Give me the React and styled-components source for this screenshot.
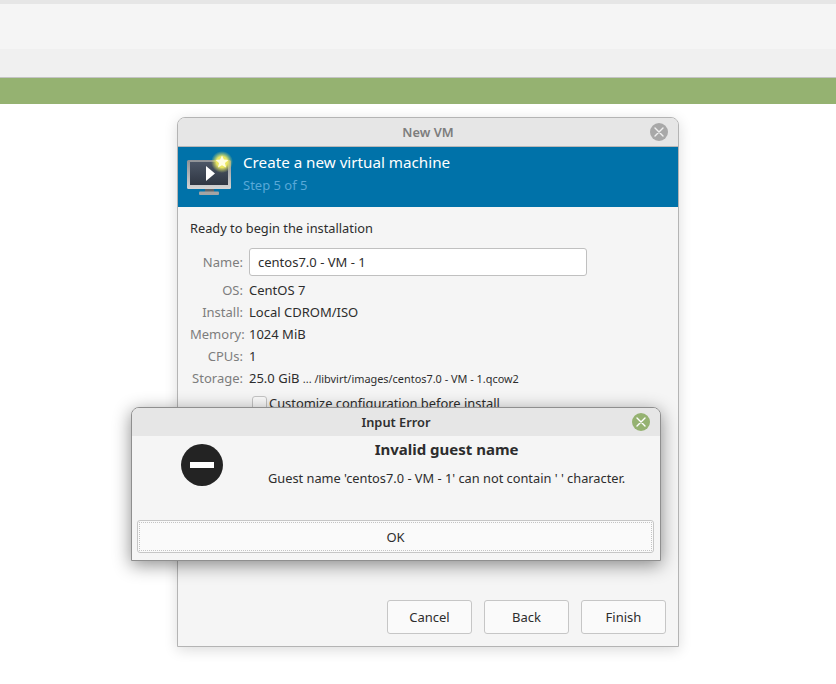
import React from 'react'
import styled, { createGlobalStyle } from 'styled-components'

const GlobalStyle = createGlobalStyle`
  html, body { margin: 0; padding: 0; background: #ffffff; }
  body {
    font-family: "Noto Sans", "Open Sans", sans-serif;
    font-size: 13px;
    color: #2d2d2d;
  }
`

const Page = styled.div`
  width: 836px;
  height: 684px;
  overflow: hidden;
`
const TopStrip = styled.div`
  height: 4px;
  background: #e6e6e6;
`
const TopBand = styled.div`
  height: 45px;
  background: #f5f5f5;
`
const LowerBand = styled.div`
  height: 28px;
  background: #f0f0f0;
  border-bottom: 1px solid #c4c4c4;
`
const GreenBar = styled.div`
  height: 26px;
  background: #95b271;
`
const Stage = styled.div`
  padding: 13px 0 0 177px;
`
const VmWindow = styled.div`
  position: relative;
  box-sizing: border-box;
  width: 502px;
  height: 530px;
  display: flex;
  flex-direction: column;
  background: #f5f5f5;
  border: 1px solid #b4b4b4;
  border-top-left-radius: 8px;
  border-top-right-radius: 8px;
  box-shadow: 0 3px 14px rgba(0, 0, 0, 0.14);
`
const TitleBar = styled.div`
  position: relative;
  flex: none;
  height: 28px;
  display: flex;
  align-items: center;
  justify-content: center;
  background: #e6e6e6;
  border-bottom: 1px solid #b8b8b8;
  border-top-left-radius: 7px;
  border-top-right-radius: 7px;
  font-weight: 600;
  font-size: 12.8px;
  color: ${p => (p.$active ? '#2f2f2f' : '#7d7d7d')};
`
const CloseDot = styled.span`
  position: absolute;
  right: ${p => p.$right}px;
  top: 5px;
  width: 18px;
  height: 18px;
  border-radius: 50%;
  display: flex;
  align-items: center;
  justify-content: center;
  background: ${p => p.$bg};
`
const Banner = styled.div`
  flex: none;
  height: 60px;
  display: flex;
  background: #0072a9;
`
const BannerIcon = styled.div`
  flex: none;
  width: 65px;
  padding: 2px 0 0 7px;
  box-sizing: border-box;
`
const BannerText = styled.div`
  display: flex;
  flex-direction: column;
  padding-top: 4px;
`
const BannerTitle = styled.div`
  font-size: 15.2px;
  line-height: 22px;
  color: #ffffff;
`
const BannerStep = styled.div`
  margin-top: 3px;
  font-size: 13px;
  line-height: 18px;
  color: #58a9d8;
`
const Body = styled.div`
  flex: 1;
  display: flex;
  flex-direction: column;
  padding: 12px;
`
const Heading = styled.div`
  font-size: 12.8px;
  line-height: 18px;
  color: #2d2d2d;
`
const InfoGrid = styled.div`
  margin-top: 11px;
  display: grid;
  grid-template-columns: 53px 1fr;
  grid-template-rows: 31px repeat(5, 22px);
  column-gap: 6px;
  align-items: start;
`
const Label = styled.div`
  text-align: right;
  font-size: 13px;
  line-height: ${p => (p.$tall ? 28 : 22)}px;
  color: #7d7d7d;
  white-space: nowrap;
`
const Value = styled.div`
  font-size: 13px;
  line-height: 22px;
  color: #2d2d2d;
  white-space: nowrap;
`
const PathText = styled.span`
  font-size: 10.9px;
`
const NameInput = styled.div`
  box-sizing: border-box;
  width: 338px;
  height: 28px;
  padding-left: 8px;
  display: flex;
  align-items: center;
  background: #ffffff;
  border: 1px solid #c0c0c0;
  border-radius: 3px;
  font-size: 13px;
  color: #2d2d2d;
`
const CheckRow = styled.div`
  margin: 5px 0 0 62px;
  display: flex;
  align-items: center;
  gap: 2px;
  font-size: 12.9px;
  line-height: 18px;
`
const CheckBox = styled.span`
  width: 13px;
  height: 13px;
  background: #fafafa;
  border: 1px solid #c4c4c4;
  border-radius: 3px;
`
const ActionRow = styled.div`
  margin-top: auto;
  display: flex;
  justify-content: flex-end;
  gap: 12px;
`
const Button = styled.div`
  box-sizing: border-box;
  width: 85px;
  height: 34px;
  display: flex;
  align-items: center;
  justify-content: center;
  background: #fafafa;
  border: 1px solid #c6c6c6;
  border-radius: 3px;
  font-size: 13px;
  color: #2d2d2d;
`
const ErrorDialog = styled.div`
  position: absolute;
  left: -47px;
  top: 289px;
  box-sizing: border-box;
  width: 530px;
  height: 154px;
  display: flex;
  flex-direction: column;
  background: #f5f5f5;
  border: 1px solid #8f8f8f;
  border-top-left-radius: 8px;
  border-top-right-radius: 8px;
  box-shadow: 0 4px 18px rgba(0, 0, 0, 0.45);
`
const ErrorTitleBar = styled(TitleBar)`
  border-bottom: none;
`
const ErrorContent = styled.div`
  flex: 1;
  display: flex;
`
const ErrorIcon = styled.div`
  flex: none;
  width: 136px;
  padding: 8px 0 0 49px;
  box-sizing: border-box;
`
const ErrorText = styled.div`
  flex: 1;
  display: flex;
  flex-direction: column;
  align-items: center;
  padding: 2px 36px 0 0;
`
const ErrorHeading = styled.div`
  font-size: 15px;
  line-height: 22px;
  font-weight: 700;
  color: #2d2d2d;
`
const ErrorMessage = styled.div`
  margin-top: 9px;
  font-size: 12.8px;
  line-height: 18px;
  color: #2d2d2d;
  white-space: nowrap;
`
const OkButton = styled.div`
  box-sizing: border-box;
  margin: 0 6px 7px 5px;
  height: 33px;
  padding: 1px;
  background: #fafafa;
  border: 1px solid #c6c6c6;
  border-radius: 3px;
`
const OkFocus = styled.div`
  height: 100%;
  display: flex;
  align-items: center;
  justify-content: center;
  border: 1px dotted #c4c4c4;
  box-sizing: border-box;
  font-size: 13px;
  color: #2d2d2d;
`

const CloseIcon = ({ color }) => (
  <svg width="10" height="10" viewBox="0 0 10 10">
    <path d="M1 1 L9 9 M9 1 L1 9" stroke={color} strokeWidth="1.4" strokeLinecap="round" />
  </svg>
)

const MonitorIcon = () => (
  <svg width="50" height="48" viewBox="0 0 50 48">
    <defs>
      <radialGradient id="glow">
        <stop offset="0.5" stopColor="#f4ee60" stopOpacity="0.95" />
        <stop offset="1" stopColor="#c8d66a" stopOpacity="0" />
      </radialGradient>
      <linearGradient id="screen" x1="0" y1="0" x2="0" y2="1">
        <stop offset="0" stopColor="#4c5666" />
        <stop offset="1" stopColor="#2f3642" />
      </linearGradient>
      <linearGradient id="bezel" x1="0" y1="0" x2="0" y2="1">
        <stop offset="0" stopColor="#8f9296" />
        <stop offset="1" stopColor="#d4d4d4" />
      </linearGradient>
    </defs>
    <rect x="20" y="39" width="9" height="4" fill="#5f6468" />
    <rect x="14" y="42.5" width="20" height="3.5" rx="1" fill="#a4a4a4" />
    <rect x="2" y="11" width="44" height="29" rx="1.5" fill="url(#bezel)" />
    <rect x="5" y="13" width="38" height="23" fill="url(#screen)" />
    <path d="M21 17 L30 24.5 L21 32 Z" fill="#ffffff" />
    <circle cx="37" cy="13" r="11" fill="url(#glow)" />
    <path d="M37 6.5 L38.9 10.6 L43.4 11.1 L40 14.1 L41 18.5 L37 16.2 L33 18.5 L34 14.1 L30.6 11.1 L35.1 10.6 Z" fill="#fffde0" />
  </svg>
)

const NoEntryIcon = () => (
  <svg width="42" height="42" viewBox="0 0 42 42">
    <circle cx="21" cy="21" r="21" fill="#232323" />
    <rect x="9" y="18" width="24" height="6" fill="#ffffff" />
  </svg>
)

const App = () => {
  return (
    <Page>
      <GlobalStyle />
      <TopStrip />
      <TopBand />
      <LowerBand />
      <GreenBar />
      <Stage>
        <VmWindow>
          <TitleBar>
            New VM
            <CloseDot $right={10} $bg="#a8a8a8">
              <CloseIcon color="#f0f0f0" />
            </CloseDot>
          </TitleBar>
          <Banner>
            <BannerIcon>
              <MonitorIcon />
            </BannerIcon>
            <BannerText>
              <BannerTitle>Create a new virtual machine</BannerTitle>
              <BannerStep>Step 5 of 5</BannerStep>
            </BannerText>
          </Banner>
          <Body>
            <Heading>Ready to begin the installation</Heading>
            <InfoGrid>
              <Label $tall>Name:</Label>
              <NameInput>centos7.0 - VM - 1</NameInput>
              <Label>OS:</Label>
              <Value>CentOS 7</Value>
              <Label>Install:</Label>
              <Value>Local CDROM/ISO</Value>
              <Label>Memory:</Label>
              <Value>1024 MiB</Value>
              <Label>CPUs:</Label>
              <Value>1</Value>
              <Label>Storage:</Label>
              <Value>
                25.0 GiB <PathText>... /libvirt/images/centos7.0 - VM - 1.qcow2</PathText>
              </Value>
            </InfoGrid>
            <CheckRow>
              <CheckBox />
              Customize configuration before install
            </CheckRow>
            <ActionRow>
              <Button>Cancel</Button>
              <Button>Back</Button>
              <Button>Finish</Button>
            </ActionRow>
          </Body>
          <ErrorDialog>
            <ErrorTitleBar $active>
              Input Error
              <CloseDot $right={10} $bg="#95b271">
                <CloseIcon color="#ffffff" />
              </CloseDot>
            </ErrorTitleBar>
            <ErrorContent>
              <ErrorIcon>
                <NoEntryIcon />
              </ErrorIcon>
              <ErrorText>
                <ErrorHeading>Invalid guest name</ErrorHeading>
                <ErrorMessage>Guest name 'centos7.0 - VM - 1' can not contain ' ' character.</ErrorMessage>
              </ErrorText>
            </ErrorContent>
            <OkButton>
              <OkFocus>OK</OkFocus>
            </OkButton>
          </ErrorDialog>
        </VmWindow>
      </Stage>
    </Page>
  )
}

export default App
